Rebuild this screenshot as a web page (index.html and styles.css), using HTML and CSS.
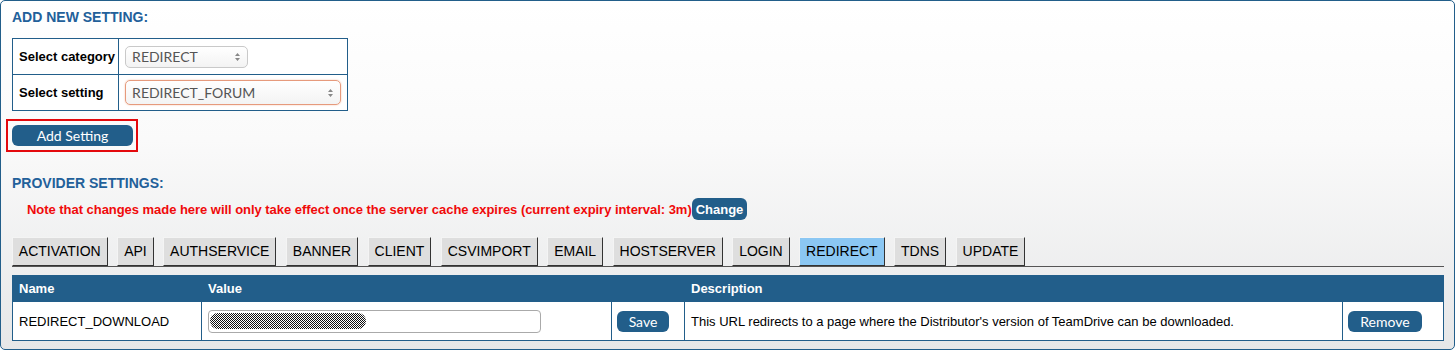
FILE: index.html
```html
<!DOCTYPE html>
<html>

<head>
	<meta charset="utf-8">
	<title>Provider Settings</title>
	<link rel="stylesheet" href="styles.css">
</head>

<body>
	<div class="panel">
		<h3 class="section-title">ADD NEW SETTING:</h3>
		<table class="add-table">
			<tr>
				<td class="label">Select category</td>
				<td>
					<div class="select select-cat">REDIRECT<span class="arrows"><svg width="7" height="10" viewBox="0 0 7 10"><path d="M1 4 L3.5 1 L6 4 Z M1 6 L3.5 9 L6 6 Z" fill="#888"/></svg></span></div>
				</td>
			</tr>
			<tr>
				<td class="label">Select setting</td>
				<td>
					<div class="select select-setting focus">REDIRECT_FORUM<span class="arrows"><svg width="7" height="10" viewBox="0 0 7 10"><path d="M1 4 L3.5 1 L6 4 Z M1 6 L3.5 9 L6 6 Z" fill="#888"/></svg></span></div>
				</td>
			</tr>
		</table>
		<div class="highlight">
			<button type="button" class="btn btn-add">Add Setting</button>
		</div>

		<h3 class="section-title provider">PROVIDER SETTINGS:</h3>
		<p class="note">Note that changes made here will only take effect once the server cache expires (current expiry interval: 3m)<button type="button" class="btn btn-change">Change</button></p>

		<ul class="tabs">
			<li>ACTIVATION</li>
			<li>API</li>
			<li>AUTHSERVICE</li>
			<li>BANNER</li>
			<li>CLIENT</li>
			<li>CSVIMPORT</li>
			<li>EMAIL</li>
			<li>HOSTSERVER</li>
			<li>LOGIN</li>
			<li class="active">REDIRECT</li>
			<li>TDNS</li>
			<li>UPDATE</li>
		</ul>

		<table class="settings">
			<colgroup>
				<col style="width: 189px">
				<col style="width: 410px">
				<col style="width: 73px">
				<col>
				<col style="width: 101px">
			</colgroup>
			<thead>
				<tr>
					<th>Name</th>
					<th>Value</th>
					<th></th>
					<th>Description</th>
					<th></th>
				</tr>
			</thead>
			<tbody>
				<tr>
					<td>REDIRECT_DOWNLOAD</td>
					<td>
						<div class="value-input"><span class="redacted"></span></div>
					</td>
					<td class="center"><button type="button" class="btn btn-save">Save</button></td>
					<td>This URL redirects to a page where the Distributor's version of TeamDrive can be downloaded.</td>
					<td class="center"><button type="button" class="btn btn-remove">Remove</button></td>
				</tr>
			</tbody>
		</table>
	</div>
</body>

</html>
```

FILE: styles.css
```css
* {
	box-sizing: border-box;
}

html,
body {
	margin: 0;
	padding: 0;
	font-family: "Liberation Sans", Arial, sans-serif;
	font-size: 13px;
	color: #000;
	background: #fff;
}

.panel {
	width: 1455px;
	height: 350px;
	border: 1px solid #225e8a;
	border-radius: 5px;
	padding: 7px 10px 0 11px;
	background: linear-gradient(#fff 0%, #fafafa 40%, #e6e7e8 100%);
}

.section-title {
	margin: 0;
	font-size: 14px;
	line-height: 18px;
	font-weight: bold;
	color: #22609a;
}

/* add new setting */
.add-table {
	margin-top: 12px;
	border-collapse: collapse;
	background: #fff;
}

.add-table td {
	border: 1px solid #225e8a;
	height: 36px;
	padding: 0 6px;
}

.add-table td.label {
	width: 104px;
	padding-right: 3px;
	font-weight: bold;
	white-space: nowrap;
}

.add-table td:last-child {
	width: 229px;
}

.select {
	position: relative;
	display: flex;
	align-items: center;
	padding: 0 6px;
	font-family: Lato, "Open Sans", sans-serif;
	font-size: 14px;
	color: #555;
	border: 1px solid #c9c9c9;
	border-radius: 5px;
	background: linear-gradient(#fff, #f3f3f3);
}

.select-cat {
	width: 123px;
	height: 22px;
}

.select-setting {
	width: 216px;
	height: 25px;
}

.select.focus {
	border-color: #e69a7c;
	box-shadow: 0 0 2px #f2c3ad;
}

.arrows {
	position: absolute;
	right: 6px;
	top: 50%;
	margin-top: -5px;
	height: 10px;
	line-height: 0;
}

.highlight {
	display: inline-block;
	margin: 8px 0 0 -6px;
	border: 2px solid #e4090d;
	padding: 4px 3px 4px 4px;
}

.btn {
	display: block;
	border: 0;
	margin: 0;
	padding: 0;
	color: #fff;
	background: #225e8a;
	border-radius: 6px;
	font-family: Lato, "Open Sans", sans-serif;
	font-size: 14px;
	cursor: pointer;
}

.btn-add {
	width: 121px;
	height: 21px;
	line-height: 21px;
}

/* provider settings */
.provider {
	margin-top: 22px;
}

.note {
	display: flex;
	align-items: center;
	margin: 6px 0 0 15px;
	height: 22px;
	color: #f00a0a;
	font-weight: bold;
	font-size: 13px;
	letter-spacing: -0.04px;
}

.btn-change {
	height: 22px;
	padding: 0 4px;
	font-family: "Liberation Sans", Arial, sans-serif;
	font-weight: bold;
	font-size: 13px;
	letter-spacing: 0;
}

.tabs {
	list-style: none;
	display: flex;
	gap: 9.6px;
	margin: 17px 0 0;
	padding: 0;
	border-bottom: 1px solid #555;
}

.tabs li {
	height: 29px;
	line-height: 27px;
	padding: 0 6px 0 5.8px;
	font-size: 14px;
	background: #dedede;
	border: 1px solid #bbb;
	border-top-color: #f4f4f4;
	border-left-color: #f4f4f4;
	border-right-color: #333;
	border-bottom-color: #333;
}

.tabs li.active {
	background: #8bc7f3;
}

.settings {
	width: 100%;
	margin-top: 8px;
	border-collapse: collapse;
	table-layout: fixed;
	background: #fff;
}

.settings th {
	height: 26px;
	padding: 0 6px;
	text-align: left;
	color: #fff;
	background: #225e8a;
	font-size: 13px;
	border: 1px solid #225e8a;
}

.settings td {
	height: 39px;
	padding: 0 6px;
	border: 1px solid #225e8a;
	white-space: nowrap;
}

.settings td.center {
	padding: 0 5px;
}

.value-input {
	width: 333px;
	height: 23px;
	border: 1px solid #aaa;
	border-radius: 4px;
	padding: 2px 1px;
}

.redacted {
	display: block;
	width: 156px;
	height: 16px;
	border-radius: 8px;
	background: repeating-conic-gradient(#111 0 25%, #fff 0 50%) 0 0 / 2px 2px;
}

.btn-save {
	width: 52px;
	height: 21px;
	margin-top: 1px;
}

.btn-remove {
	width: 74px;
	height: 21px;
	margin-top: 1px;
}
```
